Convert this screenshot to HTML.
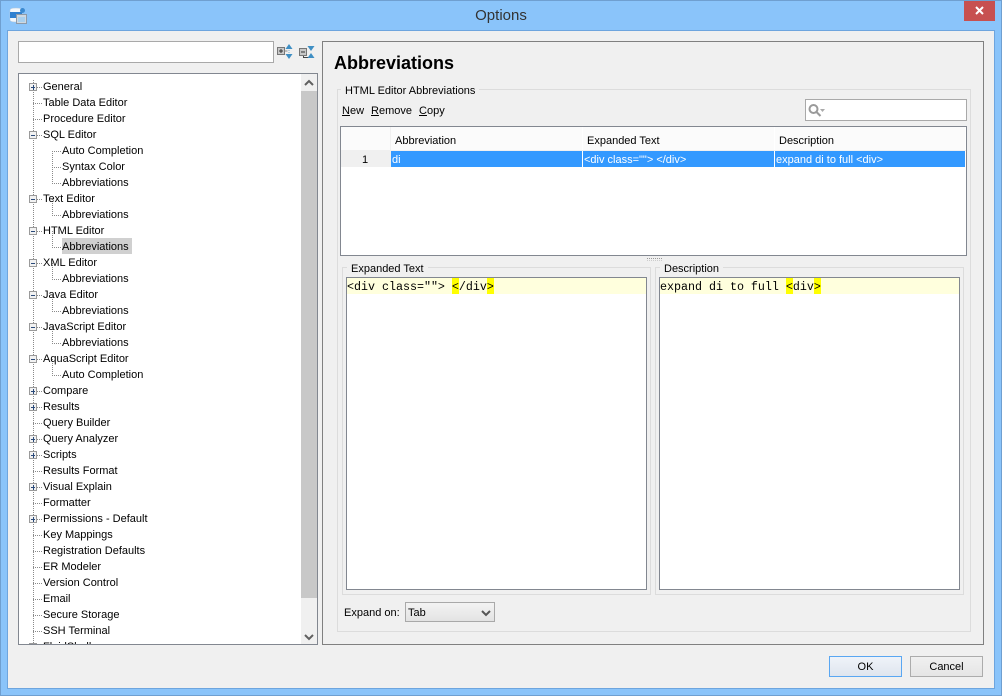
<!DOCTYPE html>
<html><head><meta charset="utf-8"><title>Options</title>
<style>
html,body{margin:0;padding:0;background:#f0f0f0}
#w{position:relative;width:1002px;height:696px;overflow:hidden;background:#8ac4fa;font:11px/16px "Liberation Sans",sans-serif;color:#000}
#w div,#w svg{position:absolute}
.t{white-space:nowrap;margin-top:1px}
.r{left:43px;white-space:nowrap;height:16px;margin-top:1px}
.c{left:62px;white-space:nowrap;height:16px;margin-top:1px}
.b{box-sizing:border-box;border:1px solid #828790;background:#fff}
.g{box-sizing:border-box;border:1px solid #dcdcdc}
.lb{background:#f0f0f0;padding:0 4px;white-space:nowrap;margin-top:1px}
.h{background:#fbfbfb;height:23px;top:127px;line-height:29px;white-space:nowrap}
.s{background:#39f;height:16px;top:151px;color:#fff;white-space:nowrap;line-height:18px}
.m{font:11.67px/16px "Liberation Mono",monospace;white-space:pre;margin-top:1px}
u{text-decoration:underline}
</style></head><body>
<div id="w">
<div style="left:0;top:0;width:1002px;height:696px;box-sizing:border-box;border:1px solid #6f9fd0"></div>
<div style="left:7px;top:30px;width:988px;height:659px;box-sizing:border-box;border:1px solid #6ea5de;background:#f0f0f0"></div>
<svg style="left:9px;top:7px" width="18" height="18" viewBox="0 0 18 18"><path d="M1 3q0-2 6-2t6 2v10q0 2-6 2t-6-2z" fill="#f4f8fc" stroke="#b8c8d8" stroke-width=".5"/><rect x="1" y="5" width="12" height="6" fill="#2f80d0"/><circle cx="13.500" cy="3.500" r="2.500" fill="#3c8ad0"/><rect x="7.500" y="7.500" width="10" height="9" fill="#cfd8e0" stroke="#8d9aa8"/><rect x="9" y="10" width="7" height="5" fill="#a9d0ee"/></svg>
<div class="t" style="left:401px;width:200px;top:6px;text-align:center;font-size:15px;line-height:18px;color:#333">Options</div>
<div style="left:964px;top:1px;width:31px;height:20px;background:#c75050"></div>
<svg style="left:964px;top:1px" width="31" height="20"><path d="M12 6 L19 13 M19 6 L12 13" stroke="#fff" stroke-width="2"/></svg>

<div class="b" style="left:18px;top:41px;width:256px;height:22px;border-color:#a9a9a9"></div>
<svg style="left:276px;top:43px" width="40" height="18"><rect x="1.500" y="4.500" width="7" height="7" fill="#c8c8c8" stroke="#777"/><path d="M3 8H7M5 6V10" stroke="#333"/><path d="M8.500 8h3" stroke="#888"/><path d="M13 1l3.500 5h-7zM13 16l3.500-5h-7z" fill="#3f8fc4"/><path d="M13 7v3" stroke="#7ab0d0" stroke-dasharray="1 1"/><rect x="23.500" y="5.500" width="7" height="7" fill="#c8c8c8" stroke="#777"/><path d="M25 9h4" stroke="#333"/><path d="M27.500 13v1.500h5" fill="none" stroke="#444"/><path d="M35 8l3.500-5h-7zM35 10l3.500 5h-7z" fill="#3f8fc4"/></svg>

<div class="b" style="left:18px;top:73px;width:300px;height:572px;border-color:#828790"></div>
<div style="left:62px;top:238px;width:70px;height:16px;background:#d0d0d0"></div>
<div style="left:0;top:0;width:301px;height:644px;overflow:hidden">
<svg style="left:0;top:0" width="301" height="660" shape-rendering="crispEdges"><g fill="none" stroke="#8a8a8a" stroke-dasharray="1 1"><path d="M33.500 80V650M52.500 151V183M52.500 199V215M52.500 231V247M52.500 263V279M52.500 295V311M52.500 327V343M52.500 359V375"/><path d="M37 87.500H43M33 103.500H43M33 119.500H43M37 135.500H43M52 151.500H62M52 167.500H62M52 183.500H62M37 199.500H43M52 215.500H62M37 231.500H43M52 247.500H62M37 263.500H43M52 279.500H62M37 295.500H43M52 311.500H62M37 327.500H43M52 343.500H62M37 359.500H43M52 375.500H62M37 391.500H43M37 407.500H43M33 423.500H43M37 439.500H43M37 455.500H43M33 471.500H43M37 487.500H43M33 503.500H43M37 519.500H43M33 535.500H43M33 551.500H43M33 567.500H43M33 583.500H43M33 599.500H43M33 615.500H43M33 631.500H43"/></g>
<g fill="#f2f2f2" stroke="#9a9a9a"><rect x="29.500" y="83.500" width="7" height="7"/><rect x="29.500" y="131.500" width="7" height="7"/><rect x="29.500" y="195.500" width="7" height="7"/><rect x="29.500" y="227.500" width="7" height="7"/><rect x="29.500" y="259.500" width="7" height="7"/><rect x="29.500" y="291.500" width="7" height="7"/><rect x="29.500" y="323.500" width="7" height="7"/><rect x="29.500" y="355.500" width="7" height="7"/><rect x="29.500" y="387.500" width="7" height="7"/><rect x="29.500" y="403.500" width="7" height="7"/><rect x="29.500" y="435.500" width="7" height="7"/><rect x="29.500" y="451.500" width="7" height="7"/><rect x="29.500" y="483.500" width="7" height="7"/><rect x="29.500" y="515.500" width="7" height="7"/><rect x="29.500" y="643.500" width="7" height="7"/></g>
<path fill="none" stroke="#2a4a7a" d="M31 87.500h4M33.500 85v5M31 135.500h4M31 199.500h4M31 231.500h4M31 263.500h4M31 295.500h4M31 327.500h4M31 359.500h4M31 391.500h4M33.500 389v5M31 407.500h4M33.500 405v5M31 439.500h4M33.500 437v5M31 455.500h4M33.500 453v5M31 487.500h4M33.500 485v5M31 519.500h4M33.500 517v5"/></svg>
<div class="r" style="top:78px">General</div>
<div class="r" style="top:94px">Table Data Editor</div>
<div class="r" style="top:110px">Procedure Editor</div>
<div class="r" style="top:126px">SQL Editor</div>
<div class="c" style="top:142px">Auto Completion</div>
<div class="c" style="top:158px">Syntax Color</div>
<div class="c" style="top:174px">Abbreviations</div>
<div class="r" style="top:190px">Text Editor</div>
<div class="c" style="top:206px">Abbreviations</div>
<div class="r" style="top:222px">HTML Editor</div>
<div class="c" style="top:238px">Abbreviations</div>
<div class="r" style="top:254px">XML Editor</div>
<div class="c" style="top:270px">Abbreviations</div>
<div class="r" style="top:286px">Java Editor</div>
<div class="c" style="top:302px">Abbreviations</div>
<div class="r" style="top:318px">JavaScript Editor</div>
<div class="c" style="top:334px">Abbreviations</div>
<div class="r" style="top:350px">AquaScript Editor</div>
<div class="c" style="top:366px">Auto Completion</div>
<div class="r" style="top:382px">Compare</div>
<div class="r" style="top:398px">Results</div>
<div class="r" style="top:414px">Query Builder</div>
<div class="r" style="top:430px">Query Analyzer</div>
<div class="r" style="top:446px">Scripts</div>
<div class="r" style="top:462px">Results Format</div>
<div class="r" style="top:478px">Visual Explain</div>
<div class="r" style="top:494px">Formatter</div>
<div class="r" style="top:510px">Permissions - Default</div>
<div class="r" style="top:526px">Key Mappings</div>
<div class="r" style="top:542px">Registration Defaults</div>
<div class="r" style="top:558px">ER Modeler</div>
<div class="r" style="top:574px">Version Control</div>
<div class="r" style="top:590px">Email</div>
<div class="r" style="top:606px">Secure Storage</div>
<div class="r" style="top:622px">SSH Terminal</div>
<div class="r" style="top:638px">FluidShell</div>
</div>
<div style="left:301px;top:74px;width:16px;height:570px;background:#f0f0f0"></div>
<div style="left:301px;top:91px;width:16px;height:507px;background:#c8c8c8"></div>
<svg style="left:301px;top:74px" width="16" height="570"><path d="M4 11l4-4 4 4M4 561l4 4 4-4" fill="none" stroke="#606060" stroke-width="2"/></svg>

<div style="left:322px;top:41px;width:662px;height:604px;box-sizing:border-box;border:1px solid #808080;background:#f0f0f0"></div>
<div class="t" style="left:334px;top:51px;font-size:18px;font-weight:bold;line-height:22px">Abbreviations</div>
<div class="g" style="left:337px;top:89px;width:634px;height:543px"></div>
<div class="lb" style="left:341px;top:82px">HTML Editor Abbreviations</div>
<div class="t" style="left:342px;top:102px"><u>N</u>ew</div>
<div class="t" style="left:371px;top:102px"><u>R</u>emove</div>
<div class="t" style="left:419px;top:102px"><u>C</u>opy</div>
<div class="b" style="left:805px;top:99px;width:162px;height:22px;border-color:#a9a9a9"></div>
<svg style="left:807px;top:102px" width="20" height="16"><circle cx="6.500" cy="7" r="4" fill="none" stroke="#9a9a9a" stroke-width="2"/><path d="M9.500 10l4 4" stroke="#9a9a9a" stroke-width="2"/><path d="M13 7h5l-2.500 3z" fill="#aaa"/></svg>

<div class="b" style="left:340px;top:126px;width:627px;height:130px"></div>
<div style="left:341px;top:127px;width:49px;height:23px;background:#fbfbfb"></div>
<div style="left:341px;top:150px;width:625px;height:1px;background:#f0f0f0"></div>
<div style="left:390px;top:127px;width:1px;height:24px;background:#f0f0f0"></div>
<div class="h" style="left:391px;width:191px;padding-left:4px;box-sizing:border-box">Abbreviation</div>
<div class="h" style="left:583px;width:191px;padding-left:4px;box-sizing:border-box">Expanded Text</div>
<div class="h" style="left:775px;width:190px;padding-left:4px;box-sizing:border-box">Description</div>
<div style="left:341px;top:151px;width:50px;height:16px;background:#f0f0f0;text-align:center;line-height:18px"><span style="position:relative;left:-1px">1</span></div>
<div class="s" style="left:391px;width:191px;padding-left:1px;box-sizing:border-box">di</div>
<div class="s" style="left:583px;width:191px;padding-left:1px;box-sizing:border-box">&lt;div class=""&gt; &lt;/div&gt;</div>
<div class="s" style="left:775px;width:190px;padding-left:1px;box-sizing:border-box">expand di to full &lt;div&gt;</div>

<svg style="left:647px;top:258px" width="16" height="3"><path d="M0 .5H15" stroke="#999" stroke-dasharray="1 1"/><path d="M0 2.500H15" stroke="#ccc" stroke-dasharray="1 1"/></svg>

<div class="g" style="left:342px;top:267px;width:309px;height:328px"></div>
<div class="lb" style="left:347px;top:260px">Expanded Text</div>
<div class="b" style="left:346px;top:277px;width:301px;height:313px"></div>
<div style="left:347px;top:278px;width:299px;height:16px;background:#ffffdd"></div>
<div style="left:452px;top:278px;width:7px;height:16px;background:#ff0"></div>
<div style="left:487px;top:278px;width:7px;height:16px;background:#ff0"></div>
<div class="m" style="left:347px;top:278px">&lt;div class=""&gt; &lt;/div&gt;</div>

<div class="g" style="left:655px;top:267px;width:309px;height:328px"></div>
<div class="lb" style="left:660px;top:260px">Description</div>
<div class="b" style="left:659px;top:277px;width:301px;height:313px"></div>
<div style="left:660px;top:278px;width:299px;height:16px;background:#ffffdd"></div>
<div style="left:786px;top:278px;width:7px;height:16px;background:#ff0"></div>
<div style="left:814px;top:278px;width:7px;height:16px;background:#ff0"></div>
<div class="m" style="left:660px;top:278px">expand di to full &lt;div&gt;</div>

<div class="t" style="left:344px;top:604px">Expand on:</div>
<div style="left:405px;top:602px;width:90px;height:20px;box-sizing:border-box;border:1px solid #a9a9a9;background:linear-gradient(#f3f3f3,#e3e3e3);padding-left:2px;line-height:20px">Tab</div>
<svg style="left:481px;top:609px" width="10" height="8"><path d="M1 2l4 4 4-4" fill="none" stroke="#555" stroke-width="2"/></svg>

<div style="left:829px;top:656px;width:73px;height:21px;box-sizing:border-box;border:1px solid #5aa7f2;background:linear-gradient(#eff3f9,#dfe5ee);text-align:center;line-height:21px">OK</div>
<div style="left:910px;top:656px;width:73px;height:21px;box-sizing:border-box;border:1px solid #acacac;background:linear-gradient(#f0f0f0,#e5e5e5);text-align:center;line-height:21px">Cancel</div>
</div>
</body></html>
